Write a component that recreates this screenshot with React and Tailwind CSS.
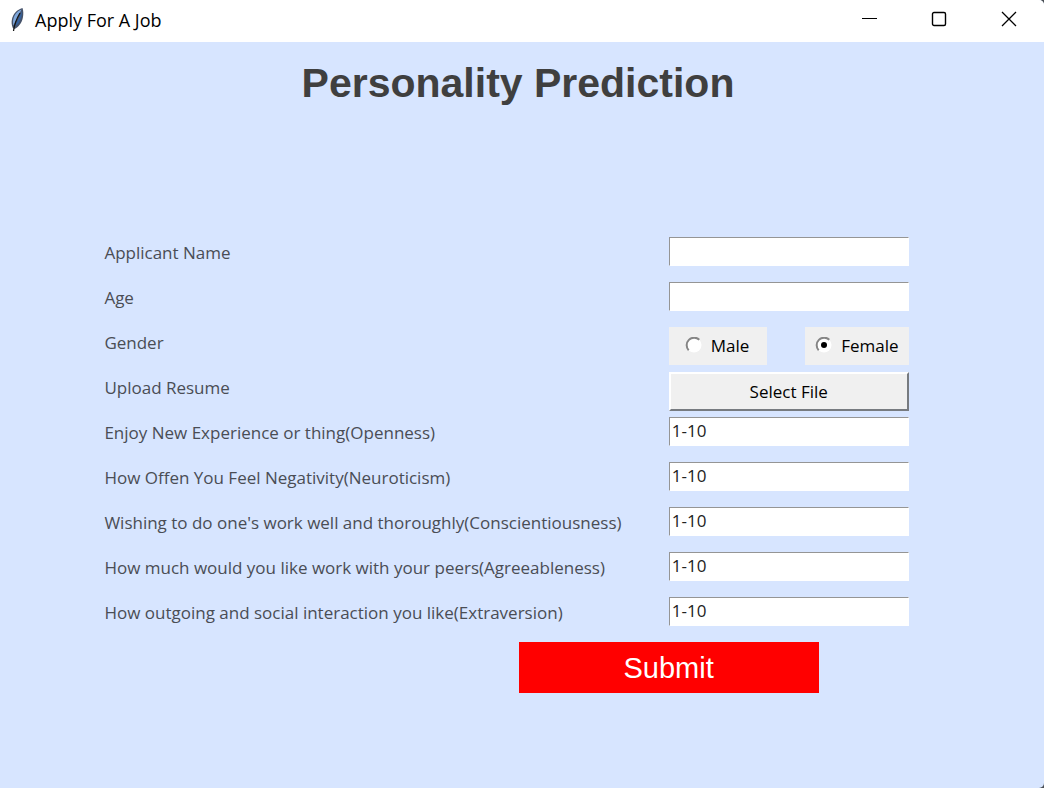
import { useState } from "react";

const ratings = [
  { id: "openness", label: "Enjoy New Experience or thing(Openness)" },
  { id: "neuroticism", label: "How Offen You Feel Negativity(Neuroticism)" },
  { id: "conscientiousness", label: "Wishing to do one's work well and thoroughly(Conscientiousness)" },
  { id: "agreeableness", label: "How much would you like work with your peers(Agreeableness)" },
  { id: "extraversion", label: "How outgoing and social interaction you like(Extraversion)" },
];

const labelClass = "pt-1 text-[17px] leading-6 text-[#4a4d55]";
const inputClass =
  "h-[29px] w-full border border-t-[#959595] border-l-[#959595] border-r-white border-b-white bg-white px-0.5 pb-0.5 text-[17px] leading-6 text-[#222] outline-none";

function Feather() {
  return (
    <svg viewBox="0 0 16 26" className="h-[26px] w-4" aria-hidden="true">
      <path d="M13.500 1C8 2.500 4 7 3 12c-.7 3-.5 6 .8 9l1.700 1c4-2 7.500-6 8.500-12 .5-3 .5-6-.5-9z" fill="#46536a" />
      <path d="M12.500 2.500C8 4 5 8 4.200 13c-.3 2-.2 4 .3 5.500C7 13 10 8 12.500 2.500z" fill="#7fa8dc" />
      <path d="M13 4C11 9 8 14 5.500 20c3-2 5.500-5 6.700-9.500.6-2.500.8-4.500.8-6.500z" fill="#35629f" />
      <path d="M11 6C8 11 5.500 16 4.500 24" fill="none" stroke="#151515" strokeWidth="1.300" />
    </svg>
  );
}

function Row({ children }) {
  return <div className="grid h-[45px] grid-cols-[565fr_240fr] items-start pt-1.5">{children}</div>;
}

function TextRow({ id, label, value = "" }) {
  return (
    <Row>
      <label htmlFor={id} className={labelClass}>{label}</label>
      <input id={id} type="text" defaultValue={value} className={inputClass} />
    </Row>
  );
}

function Radio({ value, label, selected, onSelect, padding }) {
  return (
    <label className={`flex h-[38px] items-center gap-2 bg-[#f0f0f0] text-[17px] leading-6 text-black ${padding}`}>
      <span className="grid">
        <input
          type="radio"
          name="gender"
          value={value}
          checked={selected}
          onChange={() => onSelect(value)}
          className="col-start-1 row-start-1 size-[18px] appearance-none"
        />
        <svg viewBox="0 0 18 18" className="pointer-events-none col-start-1 row-start-1 size-[18px]" aria-hidden="true">
          <circle cx="9" cy="8" r="7.500" fill="#fff" />
          <path d="M3.700 13.300A7.500 7.500 0 0 1 14.300 2.700" fill="none" stroke="#858585" strokeWidth="2" />
          {selected && <circle cx="9" cy="8" r="3" fill="#000" />}
        </svg>
      </span>
      {label}
    </label>
  );
}

export default function App() {
  const [gender, setGender] = useState("female");
  return (
    <div className="flex min-h-screen flex-col bg-[#4a4f55] font-['Open_Sans','Noto_Sans',sans-serif]">
      <div className="flex grow flex-col overflow-hidden rounded-r-[5px] bg-[#d7e5ff]">
        <header className="flex h-[42px] items-start justify-between bg-white">
          <div className="flex items-center gap-2.5 pt-1 pl-[9px] text-lg leading-8 text-black">
            <Feather />
            <span>Apply For A Job</span>
          </div>
          <div className="flex">
            <button type="button" aria-label="Minimize" className="grid h-[37px] w-[70px] place-items-center">
              <svg viewBox="0 0 16 16" className="size-4" aria-hidden="true"><path d="M1 7.500h15" stroke="#000" /></svg>
            </button>
            <button type="button" aria-label="Maximize" className="grid h-[37px] w-[70px] place-items-center">
              <svg viewBox="0 0 16 16" className="size-4" fill="none" aria-hidden="true"><rect x="1.500" y="1.500" width="13" height="13" rx="1.500" stroke="#000" strokeWidth="1.400" /></svg>
            </button>
            <button type="button" aria-label="Close" className="grid h-[37px] w-[70px] place-items-center">
              <svg viewBox="0 0 16 16" className="size-4" aria-hidden="true"><path d="M1 1l14 14M15 1L1 15" stroke="#000" strokeWidth="1.300" /></svg>
            </button>
          </div>
        </header>
        <main className="flex flex-col px-[10%]">
          <h1 className="pt-[18px] pr-2 text-center font-['Liberation_Sans',Arial,sans-serif] text-[41px] leading-[46px] font-bold text-[#3f3f3f]">
            Personality Prediction
          </h1>
          <form className="mt-[125px] flex flex-col pr-[31px]" onSubmit={(e) => e.preventDefault()}>
            <TextRow id="name" label="Applicant Name" />
            <TextRow id="age" label="Age" />
            <Row>
              <span id="gender-label" className={labelClass}>Gender</span>
              <div role="radiogroup" aria-labelledby="gender-label" className="flex justify-between">
                <Radio value="male" label="Male" padding="pl-4 pr-[18px]" selected={gender === "male"} onSelect={setGender} />
                <Radio value="female" label="Female" padding="px-2.5" selected={gender === "female"} onSelect={setGender} />
              </div>
            </Row>
            <Row>
              <span id="resume-label" className={labelClass}>Upload Resume</span>
              <button
                type="button"
                aria-describedby="resume-label"
                className="h-[39px] w-full border-2 border-t-white border-l-white border-r-[#777b80] border-b-[#777b80] bg-[#f0f0f0] text-[17px] leading-6 text-black"
              >
                Select File
              </button>
            </Row>
            {ratings.map((r) => (
              <TextRow key={r.id} id={r.id} label={r.label} value="1-10" />
            ))}
            <button
              type="submit"
              className="mt-1.5 mr-[90px] h-[51px] w-[300px] self-end bg-[#ff0000] font-['Liberation_Sans',Arial,sans-serif] text-[29px] leading-9 text-white"
            >
              Submit
            </button>
          </form>
        </main>
      </div>
    </div>
  );
}
